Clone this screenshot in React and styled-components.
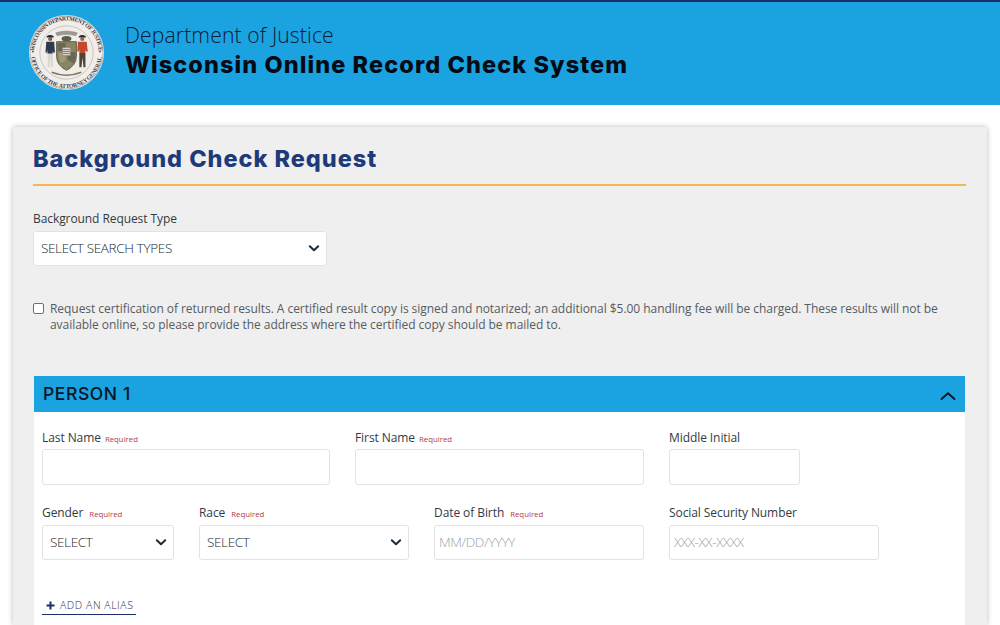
import React from "react";
import styled, { createGlobalStyle } from "styled-components";

const Global = createGlobalStyle`
  html, body { margin: 0; padding: 0; background: #fff; height: 625px; overflow: hidden; }
  body { font-family: "Open Sans", "Liberation Sans", sans-serif; color: #333; }
  * { box-sizing: border-box; }
`;

const Header = styled.header`
  height: 105px;
  background: #1aa3e0;
  border-top: 2px solid #1b2f6b;
  display: flex;
  align-items: center;
  padding: 0 0 3px 28px;
  gap: 20px;
`;
const Titles = styled.div`
  display: flex;
  flex-direction: column;
  margin-bottom: 3px;
`;
const Dept = styled.div`
  font-size: 21.2px;
  line-height: 28px;
  padding-bottom: 1px;
  font-weight: 300;
  letter-spacing: 0.1px;
  color: #0d1b33;
`;
const SystemName = styled.div`
  font-family: Inter, "Open Sans", sans-serif;
  font-size: 23.5px;
  line-height: 30px;
  font-weight: 800;
  letter-spacing: 1.08px;
  color: #050a14;
`;
const Card = styled.main`
  margin: 22px 13px 0;
  height: 498px;
  background: #efefef;
  box-shadow: 0 0 5px rgba(0, 0, 0, 0.28);
  padding: 16px 21px 0 20px;
`;
const Title = styled.h1`
  margin: 0 0 25px;
  font-family: Inter, "Open Sans", sans-serif;
  font-size: 23.5px;
  line-height: 32px;
  font-weight: 800;
  letter-spacing: 0.96px;
  color: #1f3a7a;
  padding-bottom: 9px;
  border-bottom: 2px solid #f4b752;
`;
const Label = styled.label`
  display: flex;
  align-items: baseline;
  height: 17px;
  gap: ${(p) => p.$gap || 4}px;
  font-size: 12px;
  line-height: 16px;
  font-weight: 500;
  letter-spacing: -0.08px;
  color: #333b42;
  white-space: nowrap;
`;
const Req = styled.span`
  font-size: 7.8px;
  font-weight: 400;
  letter-spacing: 0;
  color: #b03a4a;
`;
const TypeField = styled.div`
  width: 294px;
  display: flex;
  flex-direction: column;
  gap: 3px;
`;
const SelectBox = styled.div`
  height: 35px;
  background: #fff;
  border: 1px solid #dfe3e6;
  border-radius: 3px;
  display: flex;
  align-items: center;
  justify-content: space-between;
  padding: 0 5px 2px 7px;
  font-size: 13.5px;
  font-weight: 300;
  letter-spacing: -0.35px;
  color: #22282e;
`;
const CheckRow = styled.div`
  margin-top: 35px;
  display: flex;
  gap: 6px;
  align-items: flex-start;
`;
const Box = styled.span`
  flex: none;
  width: 11px;
  height: 11px;
  margin-top: 2px;
  background: #fff;
  border: 1px solid #6f6f6f;
  border-radius: 2px;
`;
const CheckText = styled.p`
  margin: 0;
  font-size: 12px;
  line-height: 16px;
  color: #555c62;
  letter-spacing: -0.05px;
`;
const Panel = styled.section`
  margin: 43px 1px 0;
  background: #fff;
  height: 249px;
`;
const PanelHead = styled.div`
  height: 36px;
  background: #1aa3e0;
  display: flex;
  align-items: center;
  justify-content: space-between;
  padding: 0 8px 2px 9px;
  font-family: Inter, "Open Sans", sans-serif;
  font-size: 17.5px;
  font-weight: 500;
  letter-spacing: 0.6px;
  color: #0a1526;
`;
const PanelBody = styled.div`
  padding: 18px 8px 0;
  display: flex;
  flex-direction: column;
`;
const Row = styled.div`
  display: flex;
  gap: 25px;
  margin-bottom: ${(p) => p.$mb || 0}px;
`;
const Field = styled.div`
  width: ${(p) => p.$w}px;
  display: flex;
  flex-direction: column;
  gap: ${(p) => p.$g || 3}px;
`;
const Input = styled.div`
  height: ${(p) => p.$h || 36}px;
  background: #fff;
  border: 1px solid #dfe3e6;
  border-radius: 3px;
  padding: 0 0 2px 4px;
  display: flex;
  align-items: center;
  font-size: 13.5px;
  font-weight: 300;
  letter-spacing: -0.4px;
  color: #9aa1a7;
`;
const AliasLink = styled.a`
  align-self: flex-start;
  margin-top: 37px;
  width: 94px;
  padding: 0 0 1px 4px;
  border-bottom: 1px solid #1b2f6b;
  display: flex;
  align-items: center;
  gap: 5px;
  font-size: 10.5px;
  font-weight: 300;
  line-height: 16px;
  letter-spacing: 0.55px;
  color: #1f2c46;
`;

const Chevron = () => (
  <svg width="14" height="14" viewBox="0 0 14 14" fill="none">
    <path d="M2.8 5.2 7 9.2l4.2-4" stroke="#1d2b3a" strokeWidth="2" strokeLinecap="round" strokeLinejoin="round" />
  </svg>
);
const Up = () => (
  <svg width="18" height="18" viewBox="0 0 18 18" fill="none" style={{ marginTop: 6 }}>
    <path d="M2.5 12 9 6.2l6.5 5.8" stroke="#0a1526" strokeWidth="1.9" strokeLinecap="round" strokeLinejoin="round" />
  </svg>
);
const Plus = () => (
  <svg width="9" height="9" viewBox="0 0 9 9">
    <path d="M4.5 0.5v8M0.5 4.5h8" stroke="#1b2f6b" strokeWidth="2" />
  </svg>
);

const Seal = () => (
  <svg width="77" height="77" viewBox="0 0 78 78" style={{ flex: "none" }}>
    <defs>
      <path id="sealTop" d="M6.5 39a32.5 32.5 0 0 1 65 0" />
      <path id="sealBot" d="M3 39a36 36 0 0 0 72 0" />
    </defs>
    <circle cx="39" cy="39" r="38" fill="#f1eeea" />
    <circle cx="39" cy="39" r="37" fill="none" stroke="#a9a49c" strokeWidth="0.8" />
    <circle cx="39" cy="39" r="27" fill="none" stroke="#a09c94" strokeWidth="0.5" />
    <text fontFamily="Liberation Serif, serif" fontSize="5.9" fontWeight="700" fill="#3f3b46">
      <textPath href="#sealTop" startOffset="50%" textAnchor="middle" textLength="99">WISCONSIN DEPARTMENT OF JUSTICE</textPath>
    </text>
    <text fontFamily="Liberation Serif, serif" fontSize="5.9" fontWeight="700" fill="#3f3b46">
      <textPath href="#sealBot" startOffset="50%" textAnchor="middle" textLength="104">OFFICE OF THE ATTORNEY GENERAL</textPath>
    </text>
    <circle cx="5" cy="38" r="1" fill="#555" />
    <circle cx="73" cy="38" r="1" fill="#555" />
    {/* motto band and badger */}
    <path d="M28 19q11-3.5 22 0l-1.5 3q-9.5-2.6-19 0z" fill="#9a9a92" stroke="#666" strokeWidth="0.3" />
    <ellipse cx="39" cy="25" rx="5" ry="2.6" fill="#5f5a4e" />
    {/* shield */}
    <path d="M29 28h20v15q0 9-10 14-10-5-10-14z" fill="#8a8564" stroke="#55523f" strokeWidth="0.9" />
    <path d="M30 29.5h8v8h-8zM40 38.5h8.2v5q-.4 4-2.6 6.5L40 46z" fill="#6a6750" />
    <path d="M31 39h7v8l-4 3q-3-3-3-7z" fill="#a19a76" />
    <rect x="35" y="34" width="8" height="8" fill="#d8d2cc" stroke="#777" strokeWidth="0.4" />
    <path d="M35.5 36h7M35.5 38h7M35.5 40h7" stroke="#b0505a" strokeWidth="0.8" />
    {/* sailor */}
    <path d="M19 22.5q3.5-2.5 7 0v1.2h-7z" fill="#23252b" />
    <circle cx="22.5" cy="25.3" r="2.1" fill="#7a5f4e" />
    <path d="M18.5 28h8l.8 11h-2l-.3-3v4.5h-5.2V36l-.5 3h-1.6z" fill="#2f3a4e" />
    <path d="M20 40h5.2v14h-2l-.6-10-.7 10H20z" fill="#dcd8cf" />
    {/* miner */}
    <path d="M51.5 22.5q3.5-2.5 7 0v1.2h-7z" fill="#2f2620" />
    <circle cx="55" cy="25.3" r="2.1" fill="#8c6650" />
    <path d="M50.5 28h9l1 10h-2l-.5-2v3.5h-6V36l-.5 2h-1.6z" fill="#c5492a" />
    <path d="M52 39.5h6.2V54h-2l-1-10-1 10H52z" fill="#4d443a" />
    <path d="M24 59q15 6 30 0" stroke="#7b775f" strokeWidth="1.4" fill="none" />
  </svg>
);

export default function App() {
  return (
    <>
      <Global />
      <Header>
        <Seal />
        <Titles>
          <Dept>Department of Justice</Dept>
          <SystemName>Wisconsin Online Record Check System</SystemName>
        </Titles>
      </Header>
      <Card>
        <Title>Background Check Request</Title>
        <TypeField>
          <Label>Background Request Type</Label>
          <SelectBox>
            SELECT SEARCH TYPES
            <Chevron />
          </SelectBox>
        </TypeField>
        <CheckRow>
          <Box />
          <CheckText>
            Request certification of returned results. A certified result copy is signed and notarized; an additional $5.00 handling fee will be charged. These results will not be available online, so please provide the address where the certified copy should be mailed to.
          </CheckText>
        </CheckRow>
        <Panel>
          <PanelHead>
            PERSON 1
            <Up />
          </PanelHead>
          <PanelBody>
            <Row $mb={20}>
              <Field $w={288} $g={2}>
                <Label>Last Name <Req>Required</Req></Label>
                <Input />
              </Field>
              <Field $w={289} $g={2}>
                <Label>First Name <Req>Required</Req></Label>
                <Input />
              </Field>
              <Field $w={131} $g={2}>
                <Label>Middle Initial</Label>
                <Input />
              </Field>
            </Row>
            <Row>
              <Field $w={132}>
                <Label $gap={6}>Gender <Req>Required</Req></Label>
                <SelectBox>SELECT<Chevron /></SelectBox>
              </Field>
              <Field $w={210}>
                <Label $gap={6}>Race <Req>Required</Req></Label>
                <SelectBox>SELECT<Chevron /></SelectBox>
              </Field>
              <Field $w={210}>
                <Label $gap={6}>Date of Birth <Req>Required</Req></Label>
                <Input $h={35}>MM/DD/YYYY</Input>
              </Field>
              <Field $w={210}>
                <Label>Social Security Number</Label>
                <Input $h={35}>XXX-XX-XXXX</Input>
              </Field>
            </Row>
            <AliasLink><Plus />ADD AN ALIAS</AliasLink>
          </PanelBody>
        </Panel>
      </Card>
    </>
  );
}
